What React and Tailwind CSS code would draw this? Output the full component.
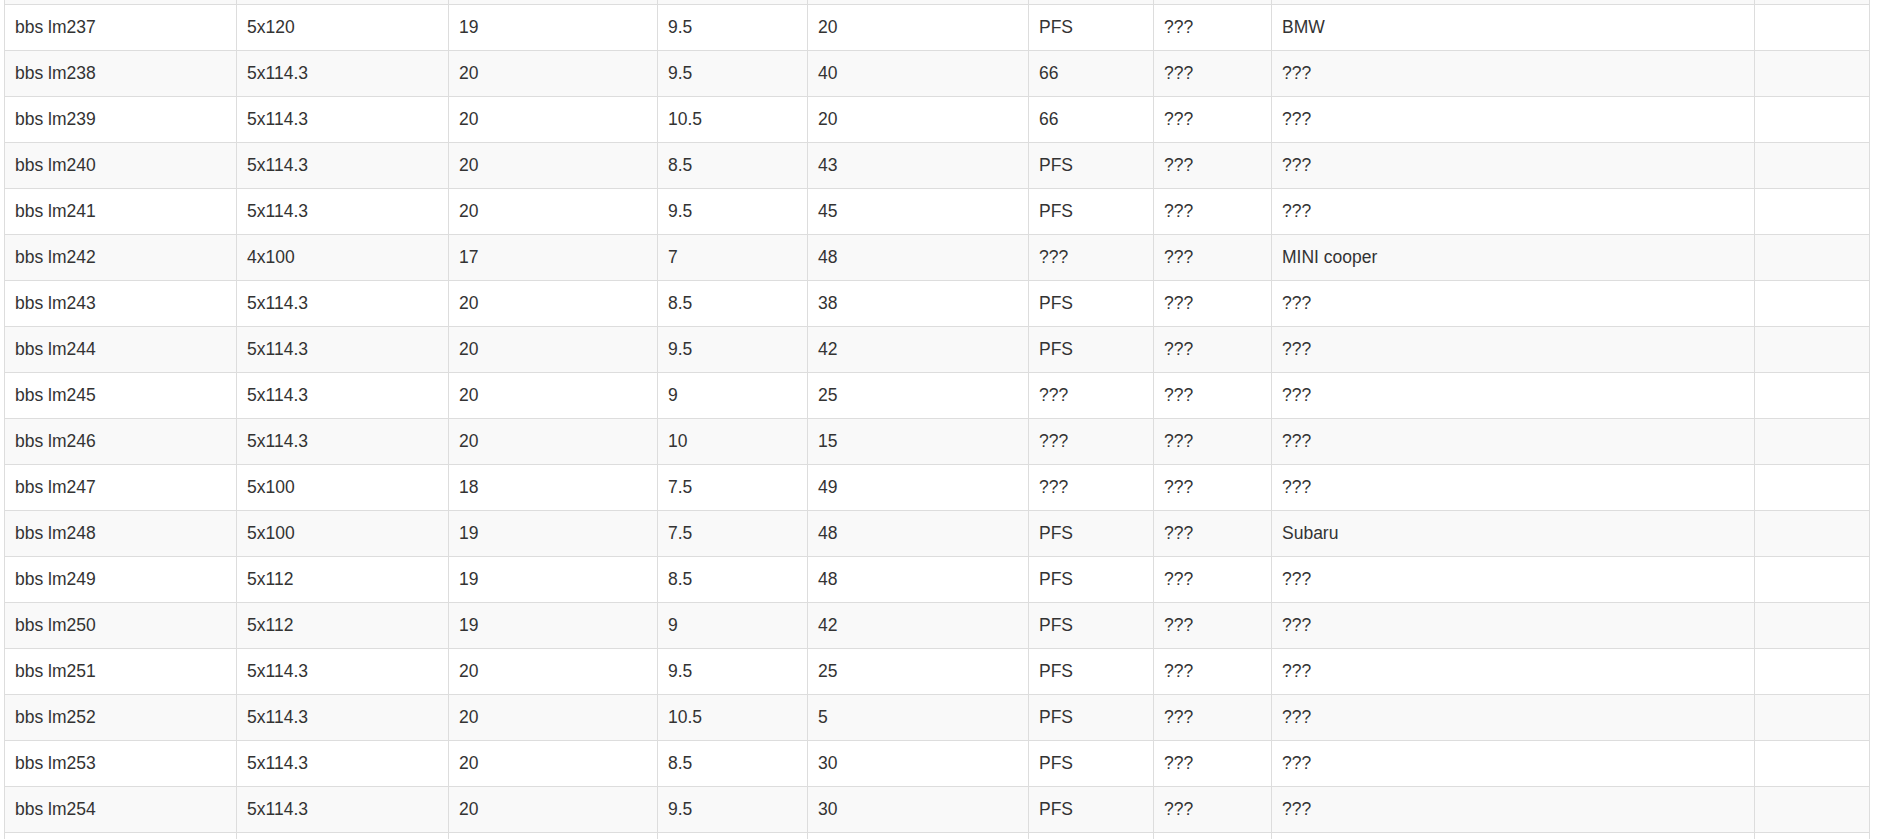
import React from 'react';

const rows = [
  ['bbs lm237', '5x120', '19', '9.5', '20', 'PFS', '???', 'BMW'],
  ['bbs lm238', '5x114.3', '20', '9.5', '40', '66', '???', '???'],
  ['bbs lm239', '5x114.3', '20', '10.5', '20', '66', '???', '???'],
  ['bbs lm240', '5x114.3', '20', '8.5', '43', 'PFS', '???', '???'],
  ['bbs lm241', '5x114.3', '20', '9.5', '45', 'PFS', '???', '???'],
  ['bbs lm242', '4x100', '17', '7', '48', '???', '???', 'MINI cooper'],
  ['bbs lm243', '5x114.3', '20', '8.5', '38', 'PFS', '???', '???'],
  ['bbs lm244', '5x114.3', '20', '9.5', '42', 'PFS', '???', '???'],
  ['bbs lm245', '5x114.3', '20', '9', '25', '???', '???', '???'],
  ['bbs lm246', '5x114.3', '20', '10', '15', '???', '???', '???'],
  ['bbs lm247', '5x100', '18', '7.5', '49', '???', '???', '???'],
  ['bbs lm248', '5x100', '19', '7.5', '48', 'PFS', '???', 'Subaru'],
  ['bbs lm249', '5x112', '19', '8.5', '48', 'PFS', '???', '???'],
  ['bbs lm250', '5x112', '19', '9', '42', 'PFS', '???', '???'],
  ['bbs lm251', '5x114.3', '20', '9.5', '25', 'PFS', '???', '???'],
  ['bbs lm252', '5x114.3', '20', '10.5', '5', 'PFS', '???', '???'],
  ['bbs lm253', '5x114.3', '20', '8.5', '30', 'PFS', '???', '???'],
  ['bbs lm254', '5x114.3', '20', '9.5', '30', 'PFS', '???', '???'],
];

const gridCols = 'grid grid-cols-[232px_212px_209px_150px_221px_125px_118px_483px_115px] border-r border-[#dddddd]';

// one table row; cells get the left border, the row closes on the right
const Row = ({ cells, striped, className = '' }) => (
  <div className={`${gridCols} ${striped ? 'bg-[#f9f9f9]' : 'bg-white'} ${className}`}>
    {cells.map((c, i) => (
      <div key={i} className="border-l border-[#dddddd] px-[10px] py-[10px] leading-[25px] min-h-[45px] whitespace-nowrap overflow-hidden">
        {c}
      </div>
    ))}
  </div>
);

const emptyCells = ['', '', '', '', '', '', '', '', ''];

export default function App() {
  return (
    <div
      className="w-[1877px] h-[839px] overflow-hidden bg-white text-[#333333] text-[17.5px]"
      style={{ fontFamily: '"Liberation Sans", Arial, sans-serif' }}
    >
      <div className="ml-[4px] w-[1866px]">
        {/* tail of the previous row */}
        <div className={`${gridCols} bg-[#f9f9f9] h-[4px]`}>
          {emptyCells.map((_, i) => (
            <div key={i} className="border-l border-[#dddddd]" />
          ))}
        </div>
        {rows.map((r, idx) => (
          <Row
            key={r[0]}
            cells={[...r, '']}
            striped={idx % 2 === 1}
            className="border-t border-[#dddddd]"
          />
        ))}
        <Row cells={emptyCells} striped={false} className="border-t border-[#dddddd]" />
      </div>
    </div>
  );
}
